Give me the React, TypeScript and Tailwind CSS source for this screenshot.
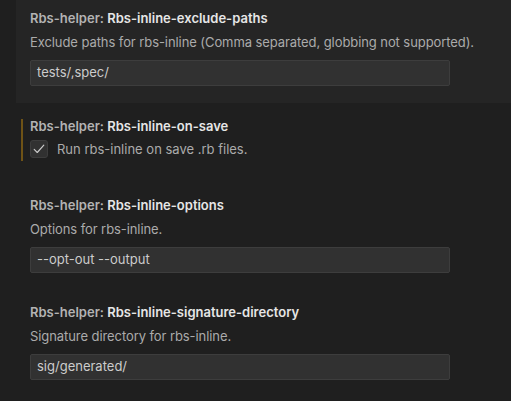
import React from 'react';

const font = { fontFamily: 'Inter, "Noto Sans", sans-serif' };

type Item = { name: string; desc: string; value: string };

const Title: React.FC<{ name: string }> = ({ name }) => (
  <div className="h-[18px] leading-[18px] text-[13px] font-semibold whitespace-nowrap">
    <span className="text-[#b3b3b3]">Rbs-helper: </span>
    <span className="text-[#e6e6e6]">{name}</span>
  </div>
);

const TextSetting: React.FC<{ item: Item; highlight?: boolean }> = ({ item, highlight }) => (
  <div className={highlight ? 'ml-[16px] pl-[14px] pt-[9px] h-[103px] bg-[#252525]' : 'pl-[30px] pt-[9px] h-[107px]'}>
    <Title name={item.name} />
    <div className="mt-[6px] h-[18px] leading-[18px] text-[13px] tracking-[-0.08px] text-[#ababab] whitespace-nowrap">{item.desc}</div>
    <div className="mt-[9px] w-[420px] h-[26px] bg-[#313131] border border-[#3d3d3d] rounded-[2px] px-[6px] flex items-center text-[13px] text-[#cccccc]">
      {item.value}
    </div>
  </div>
);

export default function App() {
  return (
    <div className="w-[511px] h-[401px] bg-[#1f1f1f] overflow-hidden" style={font}>
      <TextSetting
        highlight
        item={{
          name: 'Rbs-inline-exclude-paths',
          desc: 'Exclude paths for rbs-inline (Comma separated, globbing not supported).',
          value: 'tests/,spec/',
        }}
      />
      <div className="h-[79px] mt-[5px] pt-[9px] pl-[30px] relative">
        <div className="absolute left-[21px] top-[11px] w-[2px] h-[42px] bg-[#6f5316]" />
        <Title name="Rbs-inline-on-save" />
        <div className="mt-[5px] flex items-center gap-[9px]">
          <div className="w-[18px] h-[18px] bg-[#313131] border border-[#3d3d3d] rounded-[3px] flex items-center justify-center">
            <svg width="14" height="14" viewBox="0 0 16 16" fill="none">
              <path d="M2.5 8.5 L6 12 L13.5 3.5" stroke="#cccccc" strokeWidth="1.3" strokeLinecap="round" strokeLinejoin="round" />
            </svg>
          </div>
          <span className="text-[13px] text-[#ababab] leading-[18px]">Run rbs-inline on save .rb files.</span>
        </div>
      </div>
      <TextSetting
        item={{ name: 'Rbs-inline-options', desc: 'Options for rbs-inline.', value: '--opt-out --output' }}
      />
      <TextSetting
        item={{
          name: 'Rbs-inline-signature-directory',
          desc: 'Signature directory for rbs-inline.',
          value: 'sig/generated/',
        }}
      />
    </div>
  );
}
